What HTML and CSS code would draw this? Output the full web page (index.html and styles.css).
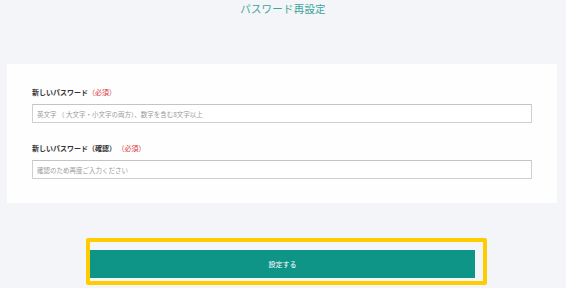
FILE: index.html
```html
<!DOCTYPE html>
<html lang="ja">
<head>
    <meta charset="UTF-8">
    <meta name="viewport" content="width=device-width, initial-scale=1.0">
    <title>パスワード再設定</title>
    <link rel="stylesheet" href="styles.css">
</head>
<body>
    <h1 class="page-title">パスワード再設定</h1>
    <div class="card">
        <div class="field">
            <label for="newPassword" class="field-label">新しいパスワード<span class="required">（必須）</span></label>
            <input type="password" id="newPassword" class="text-input" placeholder="英文字 （ 大文字・小文字の両方）、数字を含む8文字以上">
        </div>
        <div class="field">
            <label for="confirmPassword" class="field-label">新しいパスワード（確認） <span class="required">（必須）</span></label>
            <input type="password" id="confirmPassword" class="text-input" placeholder="確認のため再度ご入力ください">
        </div>
    </div>
    <div class="actions">
        <div class="focus-frame">
            <button class="submit">設定する</button>
        </div>
    </div>
</body>
</html>
```

FILE: styles.css
```css
body {
    margin: 0;
    background-color: #f4f5f9;
    font-family: 'Noto Sans CJK JP', 'Noto Sans', sans-serif;
    color: #333;
}

.page-title {
    margin: 0;
    padding-top: 2px;
    text-align: center;
    font-size: 10.5px;
    line-height: 14px;
    font-weight: normal;
    letter-spacing: 0.2px;
    color: #3aa59b;
}

.card {
    width: 500px;
    margin: 48px 0 0 7px;
    padding: 23px 25px 24px;
    background-color: #fefefe;
}

.field + .field {
    margin-top: 20px;
}

.field-label {
    display: block;
    margin-bottom: 7px;
    font-size: 7px;
    line-height: 10px;
    font-weight: bold;
    color: #333;
}

.required {
    font-weight: normal;
    color: #d8343c;
}

.text-input {
    display: block;
    box-sizing: border-box;
    width: 500px;
    height: 19px;
    margin: 0;
    padding: 0 4px;
    border: 1px solid #cfcfcf;
    border-top-color: #c4c4c4;
    background-color: #fff;
    font-family: inherit;
    font-size: 6.5px;
}

.text-input::placeholder {
    color: #9a9a9a;
}

.actions {
    margin-top: 35px;
}

.focus-frame {
    display: inline-block;
    margin-left: 86px;
    padding: 8px 8px 3px 0;
    border: 4px solid #ffcc00;
    border-radius: 2px;
}

.submit {
    display: block;
    width: 385px;
    height: 28px;
    padding: 0;
    border: none;
    background-color: #0f9488;
    color: #ffffff;
    font-family: inherit;
    font-size: 7px;
    cursor: pointer;
}
```
